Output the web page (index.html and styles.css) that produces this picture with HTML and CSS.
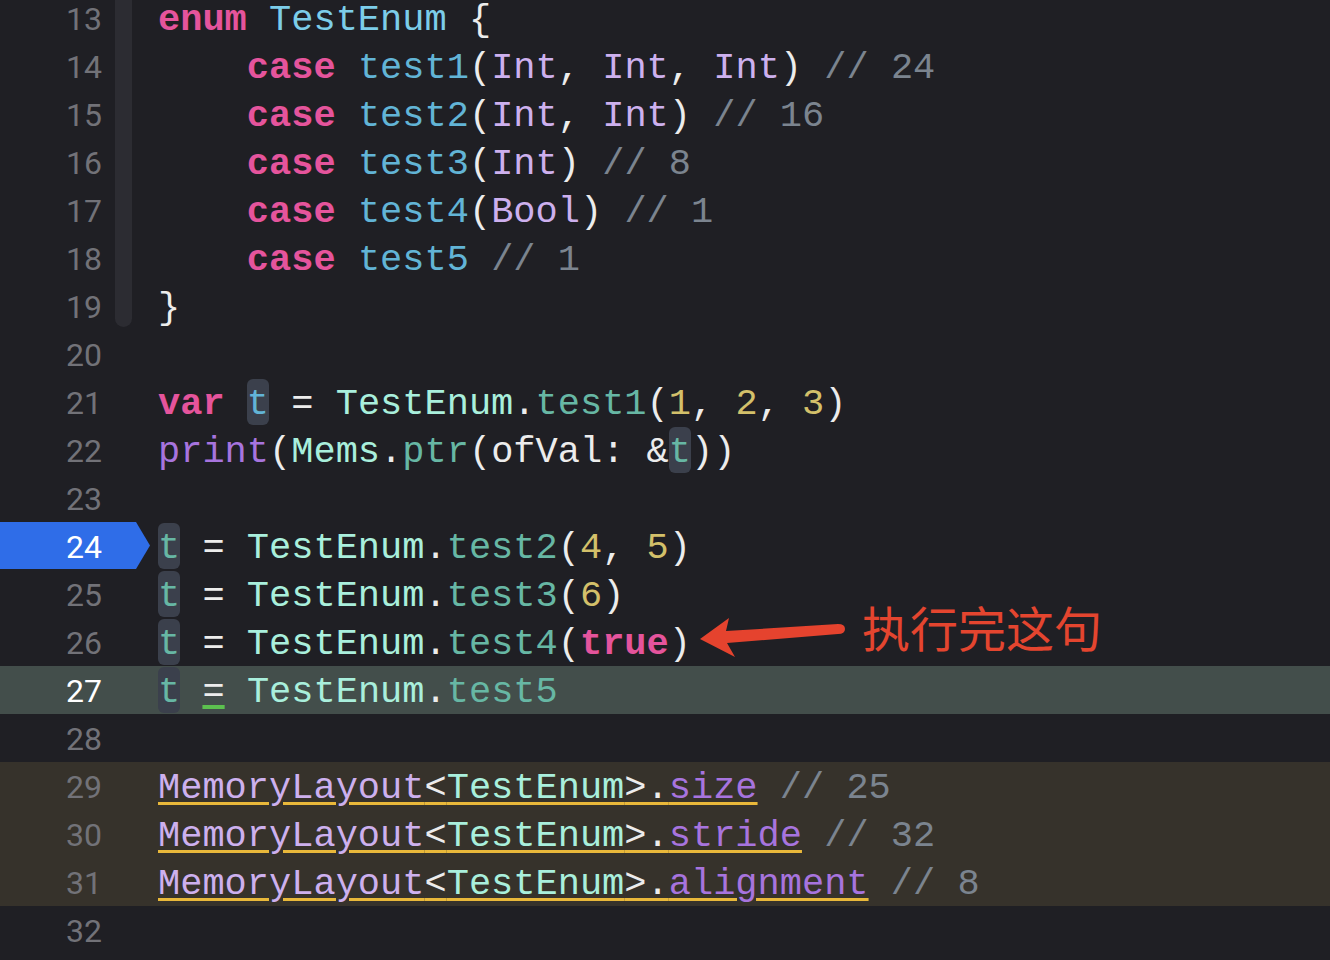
FILE: index.html
```html
<!DOCTYPE html>
<html lang="zh">
<head>
<meta charset="utf-8">
<title>TestEnum</title>
<link rel="stylesheet" href="styles.css">
</head>
<body>
<div class="editor">
  <div class="row"><div class="gutter"><span class="num">13</span><span class="fold"></span></div><div class="code"><span class="kw">enum</span> <span class="decl">TestEnum</span> {</div></div>
  <div class="row"><div class="gutter"><span class="num">14</span><span class="fold"></span></div><div class="code">    <span class="kw">case</span> <span class="case">test1</span>(<span class="ty">Int</span>, <span class="ty">Int</span>, <span class="ty">Int</span>) <span class="cm">// 24</span></div></div>
  <div class="row"><div class="gutter"><span class="num">15</span><span class="fold"></span></div><div class="code">    <span class="kw">case</span> <span class="case">test2</span>(<span class="ty">Int</span>, <span class="ty">Int</span>) <span class="cm">// 16</span></div></div>
  <div class="row"><div class="gutter"><span class="num">16</span><span class="fold"></span></div><div class="code">    <span class="kw">case</span> <span class="case">test3</span>(<span class="ty">Int</span>) <span class="cm">// 8</span></div></div>
  <div class="row"><div class="gutter"><span class="num">17</span><span class="fold"></span></div><div class="code">    <span class="kw">case</span> <span class="case">test4</span>(<span class="ty">Bool</span>) <span class="cm">// 1</span></div></div>
  <div class="row"><div class="gutter"><span class="num">18</span><span class="fold"></span></div><div class="code">    <span class="kw">case</span> <span class="case">test5</span> <span class="cm">// 1</span></div></div>
  <div class="row"><div class="gutter"><span class="num">19</span><span class="fold end"></span></div><div class="code">}</div></div>
  <div class="row"><div class="gutter"><span class="num">20</span></div><div class="code"></div></div>
  <div class="row"><div class="gutter"><span class="num">21</span></div><div class="code"><span class="kw">var</span> <span class="hl case">t</span> = <span class="pt">TestEnum</span>.<span class="pm">test1</span>(<span class="n">1</span>, <span class="n">2</span>, <span class="n">3</span>)</div></div>
  <div class="row"><div class="gutter"><span class="num">22</span></div><div class="code"><span class="fn">print</span>(<span class="pt">Mems</span>.<span class="pm">ptr</span>(ofVal: &amp;<span class="hl pm">t</span>))</div></div>
  <div class="row"><div class="gutter"><span class="num">23</span></div><div class="code"></div></div>
  <div class="row pc"><div class="gutter"><span class="num">24</span></div><div class="code"><span class="hl pm">t</span> = <span class="pt">TestEnum</span>.<span class="pm">test2</span>(<span class="n">4</span>, <span class="n">5</span>)</div></div>
  <div class="row"><div class="gutter"><span class="num">25</span></div><div class="code"><span class="hl pm">t</span> = <span class="pt">TestEnum</span>.<span class="pm">test3</span>(<span class="n">6</span>)</div></div>
  <div class="row"><div class="gutter"><span class="num">26</span></div><div class="code"><span class="hl pm">t</span> = <span class="pt">TestEnum</span>.<span class="pm">test4</span>(<span class="kw">true</span>)</div></div>
  <div class="row cur"><div class="gutter"><span class="num">27</span></div><div class="code"><span class="hl pm">t</span> <span class="gu">=</span> <span class="pt">TestEnum</span>.<span class="pm">test5</span></div></div>
  <div class="row"><div class="gutter"><span class="num">28</span></div><div class="code"></div></div>
  <div class="row warn"><div class="gutter"><span class="num">29</span></div><div class="code"><span class="ul"><span class="ty">MemoryLayout</span>&lt;<span class="pt">TestEnum</span>&gt;.<span class="fn">size</span></span> <span class="cm">// 25</span></div></div>
  <div class="row warn"><div class="gutter"><span class="num">30</span></div><div class="code"><span class="ul"><span class="ty">MemoryLayout</span>&lt;<span class="pt">TestEnum</span>&gt;.<span class="fn">stride</span></span> <span class="cm">// 32</span></div></div>
  <div class="row warn"><div class="gutter"><span class="num">31</span></div><div class="code"><span class="ul"><span class="ty">MemoryLayout</span>&lt;<span class="pt">TestEnum</span>&gt;.<span class="fn">alignment</span></span> <span class="cm">// 8</span></div></div>
  <div class="row"><div class="gutter"><span class="num">32</span></div><div class="code"></div></div>
</div>
<svg class="arrow" width="160" height="55" viewBox="690 610 160 55" aria-hidden="true">
  <path d="M700,639 L729,618 L726,631 L838,624 Q845,624 845,629 Q845,634 838,634 L727,643 L735,657 Z" fill="#e5432e"/>
</svg>
<div class="note">执行完这句</div>
</body>
</html>
```

FILE: styles.css
```css
html, body {
  margin: 0;
  padding: 0;
  background: #1f1f24;
  overflow: hidden;
}
body {
  position: relative;
  width: 1330px;
  height: 960px;
}
.editor {
  margin-top: -6px;
  display: flex;
  flex-direction: column;
}
.row {
  display: flex;
  height: 48px;
}
.gutter {
  display: flex;
  width: 132px;
  flex: none;
  height: 48px;
}
.num {
  width: 102px;
  text-align: right;
  font-family: Roboto, "Liberation Sans", sans-serif;
  font-size: 32px;
  line-height: 48px;
  padding-top: 1px;
  color: #727278;
  box-sizing: border-box;
}
.fold {
  margin-left: 13px;
  width: 17px;
  height: 48px;
  background: #2c2c32;
}
.fold.end {
  height: 45px;
  border-radius: 0 0 9px 9px;
}
.code {
  padding-left: 26px;
  padding-top: 2px;
  box-sizing: border-box;
  height: 48px;
  white-space: pre;
  font-family: "Liberation Mono", "DejaVu Sans Mono", monospace;
  font-size: 37px;
  line-height: 48px;
  color: #ececec;
}
.pc .gutter {
  width: 150px;
  margin-right: -18px;
  height: 47px;
  background: #2f6de8;
  clip-path: polygon(0 0, 136px 0, 150px 50%, 136px 100%, 0 100%);
}
.pc .num, .cur .num {
  color: #ffffff;
}
.cur {
  background: #434e4b;
}
.warn {
  background: #36322b;
}
.kw { color: #e5549c; font-weight: 700; }
.decl { color: #7ccde9; }
.case { color: #62b4d6; }
.ty { color: #cdb0ee; }
.cm { color: #7b848f; }
.pt { color: #a9efdc; }
.pm { color: #67b7a4; }
.n { color: #d3c06a; }
.fn { color: #a774de; }
.hl {
  background: #3b404c;
  border-radius: 6px;
  padding-top: 4px;
}
.gu {
  text-decoration: underline;
  text-decoration-color: #5cc04f;
  text-decoration-thickness: 4px;
  text-underline-offset: 3px;
  text-decoration-skip-ink: none;
}
.ul {
  text-decoration: underline;
  text-decoration-color: #e9b83a;
  text-decoration-thickness: 3px;
  text-underline-offset: 4px;
}
.arrow {
  position: absolute;
  left: 690px;
  top: 610px;
}
.note {
  position: absolute;
  left: 862px;
  top: 596px;
  font-family: "Noto Sans CJK SC", sans-serif;
  font-size: 48px;
  line-height: 60px;
  color: #e4452f;
  white-space: nowrap;
}
```
